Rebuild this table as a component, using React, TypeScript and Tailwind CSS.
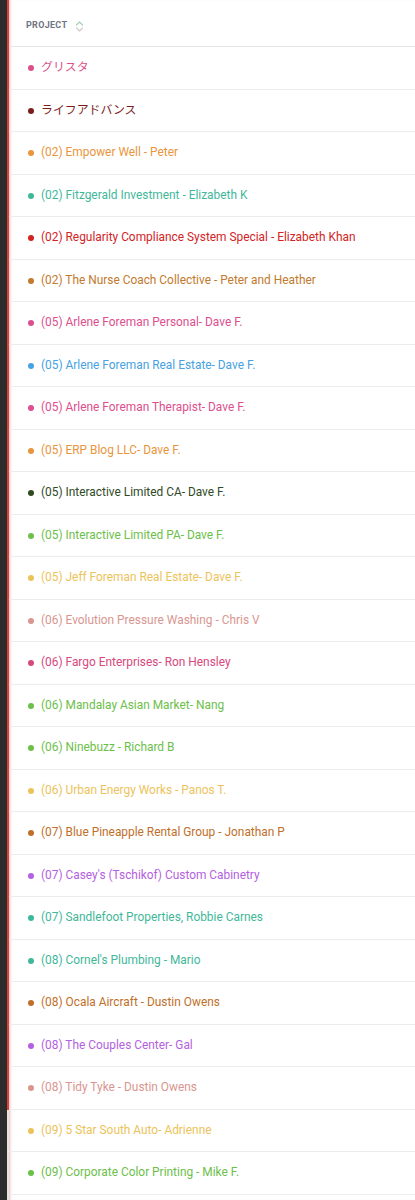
const projects: Array<{ name: string; color: string }> = [
  { name: 'グリスタ', color: '#d9508a' },
  { name: 'ライフアドバンス', color: '#7b1d1d' },
  { name: '(02) Empower Well - Peter', color: '#e9953c' },
  { name: '(02) Fitzgerald Investment - Elizabeth K', color: '#3fb89a' },
  { name: '(02) Regularity Compliance System Special - Elizabeth Khan', color: '#d2231f' },
  { name: '(02) The Nurse Coach Collective - Peter and Heather', color: '#c27a2e' },
  { name: '(05) Arlene Foreman Personal- Dave F.', color: '#dc4f8e' },
  { name: '(05) Arlene Foreman Real Estate- Dave F.', color: '#47a2e2' },
  { name: '(05) Arlene Foreman Therapist- Dave F.', color: '#dc4f8e' },
  { name: '(05) ERP Blog LLC- Dave F.', color: '#e9953c' },
  { name: '(05) Interactive Limited CA- Dave F.', color: '#2f4a1f' },
  { name: '(05) Interactive Limited PA- Dave F.', color: '#6cc04a' },
  { name: '(05) Jeff Foreman Real Estate- Dave F.', color: '#ecc35b' },
  { name: '(06) Evolution Pressure Washing - Chris V', color: '#d99690' },
  { name: '(06) Fargo Enterprises- Ron Hensley', color: '#d6487e' },
  { name: '(06) Mandalay Asian Market- Nang', color: '#6cc04a' },
  { name: '(06) Ninebuzz - Richard B', color: '#6cc04a' },
  { name: '(06) Urban Energy Works - Panos T.', color: '#ecc35b' },
  { name: '(07) Blue Pineapple Rental Group - Jonathan P', color: '#bf6f2a' },
  { name: "(07) Casey's (Tschikof) Custom Cabinetry", color: '#b45fe0' },
  { name: '(07) Sandlefoot Properties, Robbie Carnes', color: '#3fb89a' },
  { name: "(08) Cornel's Plumbing - Mario", color: '#3fb89a' },
  { name: '(08) Ocala Aircraft - Dustin Owens', color: '#bf6f2a' },
  { name: '(08) The Couples Center- Gal', color: '#b45fe0' },
  { name: '(08) Tidy Tyke - Dustin Owens', color: '#d99690' },
  { name: '(09) 5 Star South Auto- Adrienne', color: '#ecc35b' },
  { name: '(09) Corporate Color Printing - Mike F.', color: '#6cc04a' },
];

function SortIcon() {
  return (
    <svg width="9" height="13" viewBox="0 0 9 13" fill="none" strokeWidth="1.2" strokeLinecap="round" strokeLinejoin="round">
      <path d="M1.5 5 L4.5 2 L7.5 5" stroke="#a8d0b0" />
      <path d="M1.5 8 L4.5 11 L7.5 8" stroke="#cccccc" />
    </svg>
  );
}

export default function App() {
  return (
    <div className="flex min-h-[1200px] w-[415px] bg-white font-['Roboto','Noto_Sans_CJK_JP',sans-serif]">
      <div className="w-[7px] shrink-0 bg-[#2c2c2c]" />
      <div className="flex w-[2px] shrink-0 flex-col">
        <div className="h-[1110px] bg-[#d9403a]" />
        <div className="flex-1 bg-[#e4e4e4]" />
      </div>
      <div className="flex-1 shadow-[inset_3px_0_3px_-2px_rgba(230,120,110,0.5)]">
        <div className="flex h-[47px] items-center gap-[8px] border-b border-[#e6e6e6] pl-[17px] pt-[6px]">
          <span className="text-[9px] font-bold tracking-[0.3px] text-[#6f7580]">PROJECT</span>
          <SortIcon />
        </div>
        {projects.map((p) => (
          <div key={p.name} className="flex h-[42.5px] items-center border-b border-[#ececec] pl-[19px] pt-[1px]">
            <span className="mr-[7px] h-[6px] w-[6px] shrink-0 rounded-full" style={{ backgroundColor: p.color }} />
            <span className="text-[11.9px]" style={{ color: p.color }}>
              {p.name}
            </span>
          </div>
        ))}
      </div>
    </div>
  );
}
